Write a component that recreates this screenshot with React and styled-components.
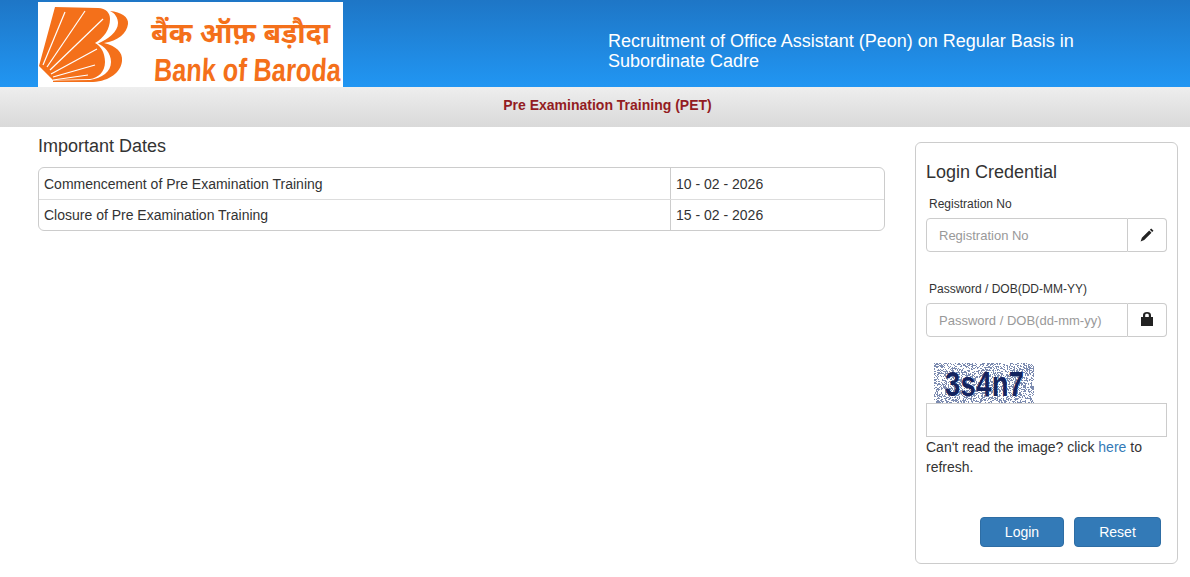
import React, { useMemo } from "react";
import styled, { createGlobalStyle } from "styled-components";

const GlobalStyle = createGlobalStyle`
  html, body {
    margin: 0;
    padding: 0;
    background: #fff;
  }
  body {
    font-family: "Liberation Sans", Arial, sans-serif;
    font-size: 14px;
    line-height: 20px;
    color: #333;
  }
  * {
    box-sizing: border-box;
  }
`;

const dates = [
  { label: "Commencement of Pre Examination Training", value: "10 - 02 - 2026" },
  { label: "Closure of Pre Examination Training", value: "15 - 02 - 2026" },
];

const BobLogo = () => (
  <LogoBox>
    <LogoMark width="100" height="85" viewBox="0 0 100 85">
      <path
        d="M17 5 L60 6 C68 6 72 11 72 17 C72 27 66 36 57 41 C63 44 67 51 67 60 C67 70 60 76 52 77 L15 78 L1 64 Z"
        fill="#f4701a"
      />
      <path
        d="M72 9 C83 10 91 15 90 22 C89 31 80 39 66 41 C78 44 85 50 84 59 C83 70 72 79 55 80 L15 80 L15 78.5 L52 78 C64 76 73 70 73 60 C73 51 66 44 60 41.5 C70 37 80 30 80 21 C80 16 77 11 72 9 Z"
        fill="#f4701a"
      />
      <g stroke="#fff" strokeWidth="1.2" fill="none">
        <path d="M5 63 L27 10" />
        <path d="M9 65 L47 9" />
        <path d="M12 68 L65 17" />
        <path d="M13 72 L59 47" />
        <path d="M15 75 L57 63" />
        <path d="M15 78 L50 73" />
      </g>
    </LogoMark>
    <LogoText>
      <HindiName>बैंक ऑफ़ बड़ौदा</HindiName>
      <EnglishName>Bank of Baroda</EnglishName>
    </LogoText>
  </LogoBox>
);

const PencilIcon = () => (
  <svg width="16" height="16" viewBox="0 0 16 16">
    <path
      d="M12.2 1.5 L14.5 3.8 L13.2 5.1 L10.9 2.8 Z M10.2 3.5 L12.5 5.8 L5.2 13.1 L1.6 14.4 L2.9 10.8 Z"
      fill="#222"
    />
  </svg>
);

const LockIcon = () => (
  <svg width="14" height="16" viewBox="0 1 14 16">
    <path
      fillRule="evenodd"
      d="M3 6 V4 C3 2 4.5 1 7 1 C9.5 1 11 2 11 4 V6 H13 V15 H1 V6 Z M5.2 6 H8.8 V4.2 C8.8 3.2 8 2.8 7 2.8 C6 2.8 5.2 3.2 5.2 4.2 Z"
      fill="#222"
    />
  </svg>
);

const CaptchaNoise = () => {
  // small seeded generator so the speckle stays the same on every load
  const dots = useMemo(() => {
    let seed = 4217;
    const rand = () => {
      seed = (seed * 16807) % 2147483647;
      return seed / 2147483647;
    };
    const list = [];
    for (let y = 0; y < 40; y++) {
      for (let x = 0; x < 100; x++) {
        if (rand() < 0.45) list.push(`M${x} ${y}h1v1h-1z`);
      }
    }
    return list.join("");
  }, []);
  return (
    <NoiseSvg width="100" height="40" viewBox="0 0 100 40">
      <path d={dots} fill="#7c8bb0" />
    </NoiseSvg>
  );
};

const App = () => (
  <>
    <GlobalStyle />
    <Header>
      <BobLogo />
      <HeaderTitle>
        Recruitment of Office Assistant (Peon) on Regular Basis in Subordinate
        Cadre
      </HeaderTitle>
    </Header>
    <SubBar>Pre Examination Training (PET)</SubBar>
    <Main>
      <DatesColumn>
        <SectionTitle>Important Dates</SectionTitle>
        <DatesTable>
          {dates.map((row) => (
            <DateRow key={row.label}>
              <DateLabel>{row.label}</DateLabel>
              <DateValue>{row.value}</DateValue>
            </DateRow>
          ))}
        </DatesTable>
      </DatesColumn>
      <LoginCard>
        <CardTitle>Login Credential</CardTitle>
        <FieldLabel>Registration No</FieldLabel>
        <InputGroup>
          <TextInput placeholder="Registration No" />
          <Addon>
            <PencilIcon />
          </Addon>
        </InputGroup>
        <FieldLabel $top={29}>Password / DOB(DD-MM-YY)</FieldLabel>
        <InputGroup>
          <TextInput placeholder="Password / DOB(dd-mm-yy)" />
          <Addon>
            <LockIcon />
          </Addon>
        </InputGroup>
        <Captcha>
          <CaptchaNoise />
          <CaptchaCode>3s4n7</CaptchaCode>
        </Captcha>
        <CaptchaInput />
        <HelpText>
          Can't read the image? click <HelpLink href="#">here</HelpLink> to
          refresh.
        </HelpText>
        <Actions>
          <PrimaryButton $width={84}>Login</PrimaryButton>
          <PrimaryButton $width={87}>Reset</PrimaryButton>
        </Actions>
      </LoginCard>
    </Main>
  </>
);

const Header = styled.header`
  display: flex;
  height: 87px;
  padding: 2px 0 0 38px;
  background: linear-gradient(to bottom, #1e76c6, #2196f3);
`;

const LogoBox = styled.div`
  display: flex;
  flex: none;
  width: 305px;
  height: 85px;
  background: #fff;
  overflow: hidden;
`;

const LogoMark = styled.svg`
  flex: none;
`;

const LogoText = styled.div`
  display: flex;
  flex-direction: column;
  margin-left: 16px;
  color: #f4701a;
  font-weight: bold;
`;

const HindiName = styled.div`
  margin: 11px 0 0 -3px;
  height: 38px;
  font-family: "Noto Sans", "DejaVu Sans", sans-serif;
  font-size: 28.5px;
  line-height: 38px;
  white-space: nowrap;
`;

const EnglishName = styled.div`
  margin-top: 3px;
  font-family: "Liberation Sans", sans-serif;
  font-size: 32px;
  line-height: 32px;
  white-space: nowrap;
  transform: scaleX(0.79) skewX(-4deg);
  transform-origin: left center;
`;

const HeaderTitle = styled.h1`
  width: 490px;
  margin: 29px 0 0 265px;
  color: #fff;
  font-size: 18px;
  font-weight: normal;
  line-height: 20px;
`;

const SubBar = styled.div`
  height: 40px;
  padding: 8px 0 0 25px;
  text-align: center;
  color: #931c22;
  font-weight: bold;
  background: linear-gradient(to bottom, #eeeeee, #d9d9d9);
`;

const Main = styled.main`
  display: flex;
  align-items: flex-start;
  padding: 7px 12px 0 38px;
`;

const DatesColumn = styled.section`
  width: 847px;
  margin-right: 30px;
`;

const SectionTitle = styled.h2`
  margin: 0 0 8px;
  font-size: 18px;
  font-weight: normal;
  line-height: 25px;
`;

const DatesTable = styled.div`
  border: 1px solid #ccc;
  border-radius: 6px;
`;

const DateRow = styled.div`
  display: grid;
  grid-template-columns: 632px 1fr;
  height: 31px;
  & + & {
    border-top: 1px solid #ddd;
  }
  & + & > * {
    padding-top: 5px;
  }
`;

const DateLabel = styled.div`
  padding: 6px 5px 0;
  border-right: 1px solid #ccc;
`;

const DateValue = styled.div`
  padding: 6px 5px 0;
`;

const LoginCard = styled.aside`
  width: 263px;
  height: 422px;
  margin-top: 8px;
  padding: 17px 10px 0;
  border: 1px solid #ccc;
  border-radius: 6px;
`;

const CardTitle = styled.h3`
  margin: 0 0 12px;
  font-size: 18px;
  font-weight: normal;
  line-height: 24px;
`;

const FieldLabel = styled.label`
  display: block;
  margin: ${(p) => p.$top || 0}px 0 5px 3px;
  font-size: 12px;
  line-height: 17px;
`;

const InputGroup = styled.div`
  display: flex;
  width: 241px;
  height: 34px;
`;

const TextInput = styled.input`
  flex: 1;
  min-width: 0;
  padding: 6px 12px;
  border: 1px solid #ccc;
  border-radius: 4px 0 0 4px;
  font: 13px "Liberation Sans", sans-serif;
  color: #555;
  &::placeholder {
    color: #999;
    opacity: 1;
  }
`;

const Addon = styled.span`
  display: flex;
  align-items: center;
  justify-content: center;
  width: 39px;
  border: 1px solid #ccc;
  border-left: 0;
  border-radius: 0 4px 4px 0;
`;

const Captcha = styled.div`
  position: relative;
  width: 100px;
  height: 40px;
  margin: 26px 0 0 8px;
  overflow: hidden;
`;

const NoiseSvg = styled.svg`
  position: absolute;
  inset: 0;
`;

const CaptchaCode = styled.span`
  position: absolute;
  left: 11px;
  top: 5px;
  font-family: "Liberation Sans", sans-serif;
  font-size: 35px;
  font-weight: bold;
  line-height: 32px;
  letter-spacing: 0.5px;
  color: #14245f;
  transform: scaleX(0.78);
  transform-origin: left center;
`;

const CaptchaInput = styled.input`
  display: block;
  width: 241px;
  height: 34px;
  border: 1px solid #ccc;
  border-radius: 0;
`;

const HelpText = styled.p`
  margin: 0;
`;

const HelpLink = styled.a`
  color: #337ab7;
  text-decoration: none;
`;

const Actions = styled.div`
  display: flex;
  justify-content: flex-end;
  gap: 10px;
  margin-top: 40px;
  padding-right: 6px;
`;

const PrimaryButton = styled.button`
  width: ${(p) => p.$width}px;
  height: 30px;
  border: 1px solid #2e6da4;
  border-radius: 4px;
  background: #337ab7;
  color: #fff;
  font: 14px "Liberation Sans", sans-serif;
`;

export default App;
